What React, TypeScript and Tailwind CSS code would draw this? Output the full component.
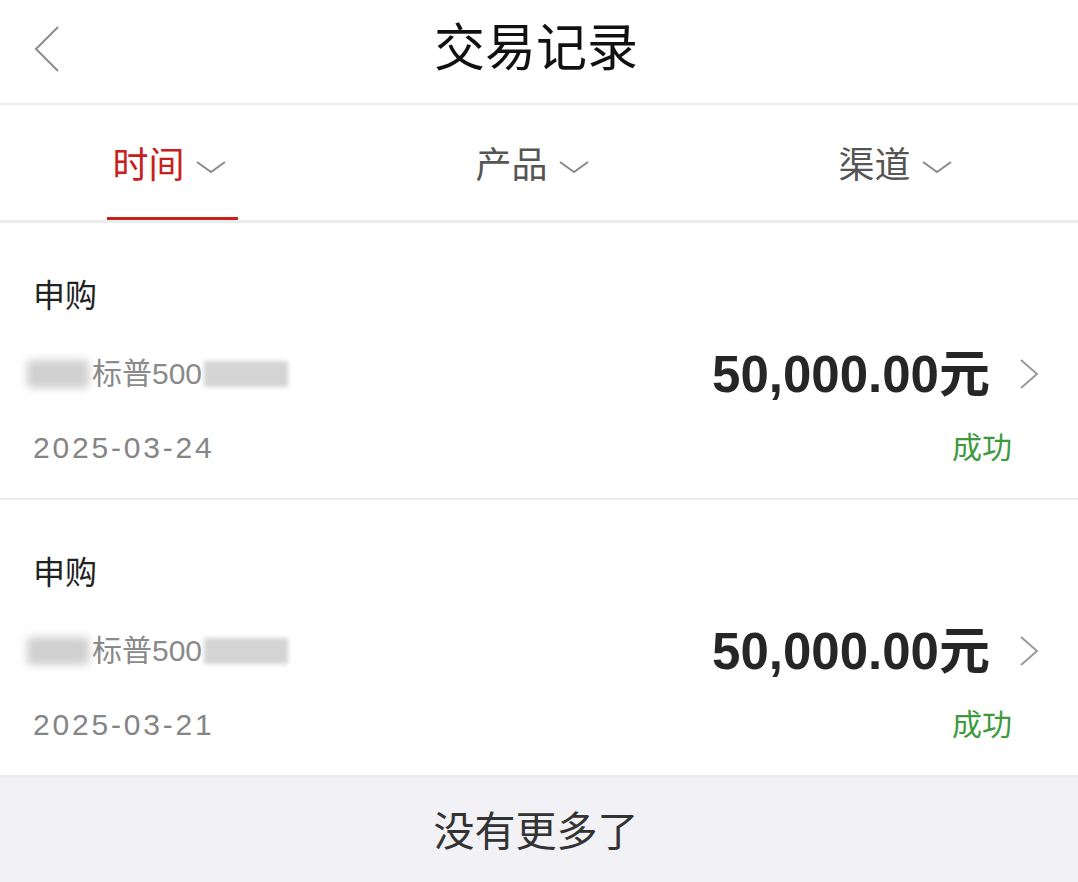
const FONT = '"Liberation Sans", "Noto Sans CJK SC", sans-serif'

type Record = { type: string; date: string; amount: string; status: string }

const records: Record[] = [
  { type: '申购', date: '2025-03-24', amount: '50,000.00', status: '成功' },
  { type: '申购', date: '2025-03-21', amount: '50,000.00', status: '成功' },
]

function Chevron({ className = '' }: { className?: string }) {
  // small down caret used in the filter tabs
  return (
    <svg width="32" height="14" viewBox="0 0 32 14" className={className}>
      <path d="M2 2 L16 12 L30 2" fill="none" stroke="#8a8a8a" strokeWidth="2" />
    </svg>
  )
}

function Tab({ label, active }: { label: string; active?: boolean }) {
  return (
    <div className="flex flex-col items-center">
      <div className="h-[112px] flex items-center gap-[10px] pt-[10px]">
        <span className={`text-[36px] leading-none ${active ? 'text-[#c7201d]' : 'text-[#555]'}`}>
          {label}
        </span>
        <Chevron className="mt-[2px]" />
      </div>
      <div className={`h-[3px] w-[131px] ml-[6px] ${active ? 'bg-[#c7201d]' : 'bg-transparent'}`} />
    </div>
  )
}

function FundName() {
  // product name is blurred out in the source screenshot
  return (
    <div className="flex items-center">
      <span className="w-[62px] h-[28px] bg-[#d0d0d0] blur-[4px] rounded-sm -ml-[6px]" />
      <span className="text-[30px] leading-none text-[#8a8a8a] ml-[3px]">标普500</span>
      <span className="w-[84px] h-[26px] bg-[#d4d4d4] blur-[2px] ml-[2px]" />
    </div>
  )
}

function RecordItem({ r }: { r: Record }) {
  return (
    <div className="h-[275px] pl-[33px] pr-[38px] pt-[53px] bg-white">
      <div className="h-[40px] flex items-center text-[32px] text-[#222] leading-none">{r.type}</div>
      <div className="mt-[30px] h-[56px] flex items-center justify-between">
        <FundName />
        <div className="flex items-center">
          <span className="text-[51px] font-bold text-[#262626] leading-none">
            {r.amount}
            <span className="font-bold">元</span>
          </span>
          <svg width="22" height="32" viewBox="0 0 22 32" className="ml-[28px]">
            <path d="M3 2 L19 16 L3 30" fill="none" stroke="#9a9a9a" strokeWidth="2" />
          </svg>
        </div>
      </div>
      <div className="mt-[26px] h-[40px] flex items-center justify-between">
        <span className="text-[30px] tracking-[2.8px] text-[#858585] leading-none">{r.date}</span>
        <span className="text-[30px] text-[#3d9a3d] leading-none mr-[28px]">{r.status}</span>
      </div>
    </div>
  )
}

export default function App() {
  return (
    <div className="w-[1078px] h-[882px] bg-white overflow-hidden flex flex-col" style={{ fontFamily: FONT }}>
      <div className="h-[103px] relative flex items-center justify-center">
        <svg width="30" height="50" viewBox="0 0 30 50" className="absolute left-[32px] top-[24px]">
          <path d="M26 3 L4 25 L26 47" fill="none" stroke="#8c8c8c" strokeWidth="2" />
        </svg>
        <span className="text-[51px] text-[#111] leading-none -mt-[6px] -ml-[6px]">交易记录</span>
      </div>
      <div className="h-[2px] bg-[#eeeeee]" />
      <div className="grid grid-cols-[363px_363px_363px] -ml-[12px]">
        <Tab label="时间" active />
        <Tab label="产品" />
        <Tab label="渠道" />
      </div>
      <div className="h-[3px] bg-[#ececec]" />
      {records.map((r, i) => (
        <div key={i}>
          {i > 0 && <div className="h-[2px] bg-[#ebebeb]" />}
          <RecordItem r={r} />
        </div>
      ))}
      <div className="h-[2px] bg-[#ececec]" />
      <div className="flex-1 bg-[#f2f2f6] flex items-center justify-center">
        <span className="text-[41px] text-[#333] leading-none mt-[6px] -ml-[6px]">没有更多了</span>
      </div>
    </div>
  )
}
